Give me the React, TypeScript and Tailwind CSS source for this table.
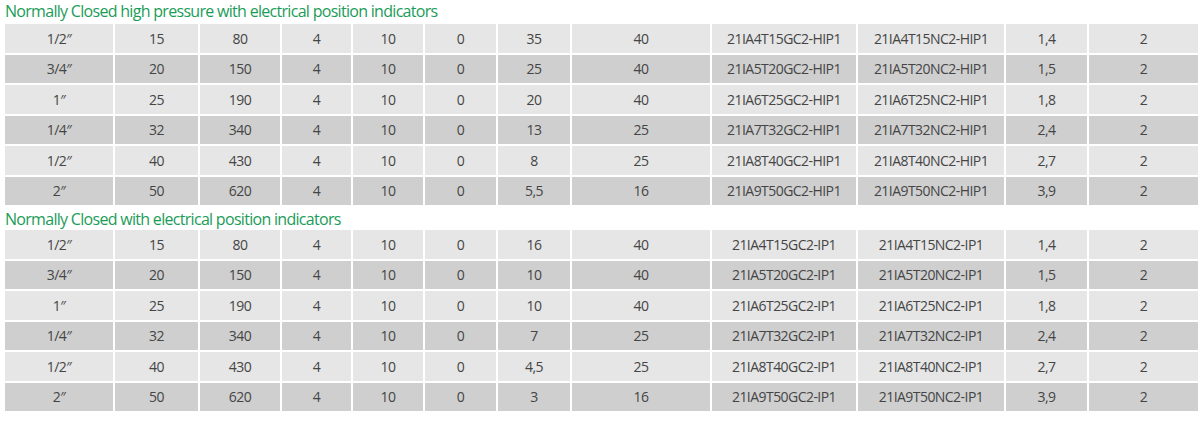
import React from "react";

const cols =
  "grid grid-cols-[108px_83px_80px_69px_70px_71px_72px_138px_144px_146px_81px_109px] gap-x-[2px]";

type Row = string[];

const t1: Row[] = [
  ["1/2\u2033", "15", "80", "4", "10", "0", "35", "40", "21IA4T15GC2-HIP1", "21IA4T15NC2-HIP1", "1,4", "2"],
  ["3/4\u2033", "20", "150", "4", "10", "0", "25", "40", "21IA5T20GC2-HIP1", "21IA5T20NC2-HIP1", "1,5", "2"],
  ["1\u2033", "25", "190", "4", "10", "0", "20", "40", "21IA6T25GC2-HIP1", "21IA6T25NC2-HIP1", "1,8", "2"],
  ["1/4\u2033", "32", "340", "4", "10", "0", "13", "25", "21IA7T32GC2-HIP1", "21IA7T32NC2-HIP1", "2,4", "2"],
  ["1/2\u2033", "40", "430", "4", "10", "0", "8", "25", "21IA8T40GC2-HIP1", "21IA8T40NC2-HIP1", "2,7", "2"],
  ["2\u2033", "50", "620", "4", "10", "0", "5,5", "16", "21IA9T50GC2-HIP1", "21IA9T50NC2-HIP1", "3,9", "2"],
];

const t2: Row[] = [
  ["1/2\u2033", "15", "80", "4", "10", "0", "16", "40", "21IA4T15GC2-IP1", "21IA4T15NC2-IP1", "1,4", "2"],
  ["3/4\u2033", "20", "150", "4", "10", "0", "10", "40", "21IA5T20GC2-IP1", "21IA5T20NC2-IP1", "1,5", "2"],
  ["1\u2033", "25", "190", "4", "10", "0", "10", "40", "21IA6T25GC2-IP1", "21IA6T25NC2-IP1", "1,8", "2"],
  ["1/4\u2033", "32", "340", "4", "10", "0", "7", "25", "21IA7T32GC2-IP1", "21IA7T32NC2-IP1", "2,4", "2"],
  ["1/2\u2033", "40", "430", "4", "10", "0", "4,5", "25", "21IA8T40GC2-IP1", "21IA8T40NC2-IP1", "2,7", "2"],
  ["2\u2033", "50", "620", "4", "10", "0", "3", "16", "21IA9T50GC2-IP1", "21IA9T50NC2-IP1", "3,9", "2"],
];

function Table({ rows }: { rows: Row[] }) {
  return (
    <div className="flex flex-col gap-y-[2px]">
      {rows.map((r, i) => (
        <div key={i} className={cols}>
          {r.map((c, j) => (
            <div
              key={j}
              className={`h-[28.5px] flex items-center justify-center text-[14px] tracking-[-0.55px] text-[#454545] ${
                i % 2 === 0 ? "bg-[#e6e6e6]" : "bg-[#cfcfcf]"
              }`}
            >
              {c}
            </div>
          ))}
        </div>
      ))}
    </div>
  );
}

export default function App() {
  return (
    <div
      className="w-[1200px] h-[421px] bg-white pl-[5px] pt-0"
      style={{ fontFamily: '"Open Sans", sans-serif' }}
    >
      <div className="h-[24px] flex items-center text-[16px] tracking-[-0.7px] text-[#1a9c58] leading-none pb-[2px]">
        Normally Closed high pressure with electrical position indicators
      </div>
      <Table rows={t1} />
      <div className="h-[25px] flex items-center text-[16px] tracking-[-0.7px] text-[#1a9c58] leading-none pt-[3px]">
        Normally Closed with electrical position indicators
      </div>
      <Table rows={t2} />
    </div>
  );
}
